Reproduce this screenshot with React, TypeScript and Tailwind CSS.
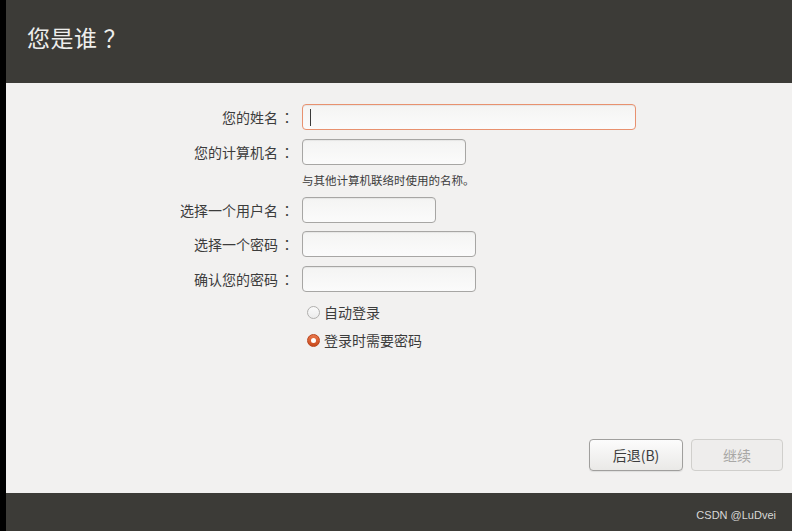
import React from "react";

const cjk = { fontFamily: '"Noto Sans CJK SC", "Noto Sans", sans-serif' };

function Field({ label, width, focused }: { label: string; width: string; focused?: boolean }) {
  return (
    <div className="flex items-center h-[26px]">
      <div className="w-[296px] shrink-0 flex justify-end items-center text-[14px] text-[#3c3c3c] pr-[6px] leading-none">
        <span>{label}</span>
        <span className="w-[18px] text-center" style={{ fontFamily: '"Noto Sans CJK TC", sans-serif' }}>
          ：
        </span>
      </div>
      <div
        className={
          "relative h-[26px] rounded-[4px] border bg-gradient-to-b from-[#f4f4f3] to-[#fbfbfb] shadow-[inset_0_1px_1px_rgba(0,0,0,0.06)] " +
          width +
          (focused ? " border-[#e8916f]" : " border-[#a7a6a4]")
        }
      >
        {focused && <div className="absolute left-[7px] top-[4px] w-px h-[17px] bg-[#3a3a3a]" />}
      </div>
    </div>
  );
}

function Radio({ checked, label }: { checked?: boolean; label: string }) {
  return (
    <div className="flex items-center h-[20px] pl-[301px]">
      <div className="w-[13px] flex justify-center mr-[4px]">
        {checked ? (
          <div className="w-[13px] h-[13px] rounded-full bg-gradient-to-b from-[#e9774a] to-[#c94a1b] border border-[#b9441c] flex items-center justify-center">
            <div className="w-[5px] h-[5px] rounded-full bg-white" />
          </div>
        ) : (
          <div className="w-[13px] h-[13px] rounded-full border border-[#b0afad] bg-gradient-to-b from-[#fafafa] to-[#ececec]" />
        )}
      </div>
      <span className="text-[14px] text-[#3c3c3c] leading-none">{label}</span>
    </div>
  );
}

export default function App() {
  return (
    <div className="w-[792px] h-[531px] flex bg-black overflow-hidden" style={cjk}>
      <div className="w-[6px] h-full bg-black" />
      <div className="flex-1 flex flex-col">
        <div className="h-[83px] bg-[#3c3b37] flex items-center pl-[21px] pb-[8px]">
          <h1 className="text-[23px] text-[#eeeeec] leading-none tracking-[0.5px]">
            您是谁<span className="ml-[6px]">？</span>
          </h1>
        </div>
        <div className="flex-1 bg-[#f2f1f0] flex flex-col">
          <div className="pt-[21px] flex flex-col">
            <Field label="您的姓名" width="w-[334px]" focused />
            <div className="h-[9px]" />
            <Field label="您的计算机名" width="w-[164px]" />
            <div className="h-[32px] flex items-center pl-[296px] text-[11.5px] text-[#3c3c3c] leading-none">
              与其他计算机联络时使用的名称。
            </div>
            <Field label="选择一个用户名" width="w-[134px]" />
            <div className="h-[8px]" />
            <Field label="选择一个密码" width="w-[174px]" />
            <div className="h-[9px]" />
            <Field label="确认您的密码" width="w-[174px]" />
            <div className="h-[10px]" />
            <Radio label="自动登录" />
            <div className="h-[8px]" />
            <Radio label="登录时需要密码" checked />
          </div>
          <div className="flex-1" />
          <div className="flex justify-end gap-[8px] pr-[9px] pb-[22px]">
            <button className="w-[94px] h-[32px] rounded-[4px] border border-[#a09f9d] bg-gradient-to-b from-[#fcfcfc] to-[#eae9e7] text-[14px] text-[#3c3c3c] shadow-[0_1px_1px_rgba(0,0,0,0.08)]">
              后退(B)
            </button>
            <button className="w-[92px] h-[32px] rounded-[4px] border border-[#d0cfcc] bg-[#eeedec] text-[14px] text-[#a9a8a6]">
              继续
            </button>
          </div>
        </div>
        <div className="h-[38px] bg-[#3c3b37] flex items-center justify-end pr-[16px] pt-[6px]">
          <span className="text-[11px] text-[#d8d8d6]" style={{ fontFamily: '"Liberation Sans", Arial, sans-serif' }}>
            CSDN @LuDvei
          </span>
        </div>
      </div>
    </div>
  );
}
